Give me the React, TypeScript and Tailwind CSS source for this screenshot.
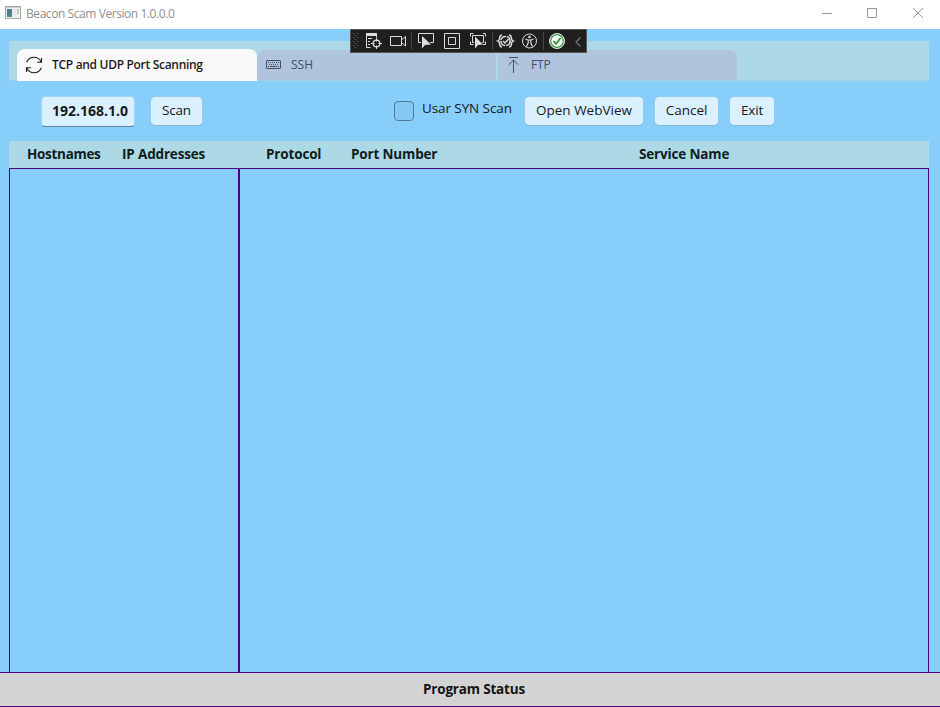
import type { ReactNode } from "react";

function WindowIcon() {
  return (
    <svg width="16" height="13" viewBox="0 0 16 13" shapeRendering="crispEdges">
      <defs>
        <linearGradient id="pane" x1="0" y1="0" x2="1" y2="1">
          <stop offset="0" stopColor="#4a6fa5" />
          <stop offset="1" stopColor="#3f9a78" />
        </linearGradient>
      </defs>
      <rect x="0.5" y="0.5" width="15" height="12" fill="#f1f3f3" stroke="#a3a9aa" />
      <rect x="1" y="1" width="14" height="1" fill="#c9cecf" />
      <rect x="2" y="3" width="5" height="8" fill="url(#pane)" />
      <rect x="8" y="3" width="4" height="8" fill="#e4ebe9" />
      <rect x="12" y="3" width="2" height="5" fill="#b9cfc6" />
    </svg>
  );
}

function TitleBar() {
  return (
    <header className="flex h-[29px] items-start bg-white pl-[5px]">
      <div className="pt-[6px]">
        <WindowIcon />
      </div>
      <span className="ml-[5px] pt-[5px] text-[12px] leading-[18px] tracking-[-0.43px] text-[#8f8f8f]">
        Beacon Scam Version 1.0.0.0
      </span>
      <svg className="ml-auto mr-[16px] mt-[7px]" width="102" height="12" viewBox="0 0 102 12" fill="none" stroke="#999">
        <path d="M0 6.5h10M45.5 1.5h9v9h-9z" />
        <path d="M91 1l10 10M101 1L91 11" />
      </svg>
    </header>
  );
}

function SyncIcon() {
  return (
    <svg width="18" height="18" viewBox="0 0 18 18" fill="none" stroke="#1b1b1b" strokeWidth="1.1">
      <path d="M1.6 6.3C3 3 5.8 1.2 9 1.2c3.300 0 5.700 1.700 7.200 4.500M16.500 2v4.300h-4.300" />
      <path d="M16.400 11.700C15 15 12.200 16.800 9 16.800c-3.300 0-5.700-1.700-7.200-4.500M1.500 16v-4.300h4.300" />
    </svg>
  );
}

function KeyboardIcon() {
  return (
    <svg width="16" height="10" viewBox="0 0 16 10" fill="none" stroke="#46505e">
      <rect x="0.500" y="0.500" width="14" height="8" rx="0.500" />
      <path d="M2 2.500h11M3 4.500h10" strokeDasharray="1 1" />
      <path d="M2 6.500h1M4 6.500h7M12 6.500h1" />
    </svg>
  );
}

function UploadIcon() {
  return (
    <svg width="11" height="17" viewBox="0 0 11 17" fill="none" stroke="#46505e">
      <path d="M1 0.500h9M5.500 3v13M0.800 7.700L5.500 3l4.700 4.700" />
    </svg>
  );
}

function Tabs() {
  return (
    <nav className="ml-[9px] mr-[11px] mt-3 flex h-10 items-end border-b border-[#a5cfdc] bg-[#add8e6] pl-2 text-[12px]">
      <div className="-mb-px flex h-8 w-[240px] items-center rounded-t-lg bg-[#f9f9f9] pl-[8px] font-semibold tracking-[-0.31px] text-[#1b1b1b]">
        <SyncIcon />
        <span className="ml-[9px]">TCP and UDP Port Scanning</span>
      </div>
      <div className="flex h-[30px] w-[239px] items-center rounded-t-lg bg-[#b0c4de] pl-[9px] text-[#46505e]">
        <KeyboardIcon />
        <span className="ml-[9px]">SSH</span>
      </div>
      <div className="ml-[2px] flex h-[30px] w-[239px] items-center rounded-t-lg bg-[#b0c4de] pl-[10px] text-[#46505e]">
        <UploadIcon />
        <span className="ml-[12px] tracking-[-0.2px]">FTP</span>
      </div>
    </nav>
  );
}

function Button({ className, children }: { className: string; children: ReactNode }) {
  return (
    <button
      className={`h-[30px] rounded-[5px] border border-[#93cdf4] border-b-[#82b5da] bg-[#dbf0fe] bg-clip-padding text-[13.5px] leading-none text-[#17191b] ${className}`}
    >
      {children}
    </button>
  );
}

function Controls() {
  return (
    <div className="flex h-[60px] items-start pl-[41px] pt-[15px] text-[#17191b]">
      <div className="h-[31px] w-[94px] rounded-[4px] border border-[#a5d5f5] border-b-[#5e7f97] bg-[#dbf0fe] bg-clip-padding pl-[10px] text-[14px] font-bold leading-[27px]">
        192.168.1.0
      </div>
      <Button className="ml-[15px] w-[53px] tracking-[-0.2px]">Scan</Button>
      <div className="ml-[191px] mt-[5px] size-5 rounded-[4px] border border-[#4f7a96] bg-[#84c8f3]" />
      <span className="ml-2 mt-[3px] w-[90px] whitespace-nowrap text-[13.5px] leading-[18px] tracking-[-0.09px]">Usar SYN Scan</span>
      <Button className="ml-[12px] w-[120px]">Open WebView</Button>
      <Button className="ml-[10px] w-[65px]">Cancel</Button>
      <Button className="ml-[10px] w-[46px] tracking-[-0.2px]">Exit</Button>
    </div>
  );
}

function Results() {
  return (
    <main className="ml-[9px] mr-[11px] flex flex-1 flex-col">
      <div className="flex h-[27px] items-center whitespace-nowrap bg-[#add8e6] pl-[18px] text-[13.5px] font-bold tracking-[-0.16px] text-[#101c20]">
        <span className="w-[95px] tracking-[-0.3px]">Hostnames</span>
        <span className="w-[144px]">IP Addresses</span>
        <span className="w-[85px]">Protocol</span>
        <span className="w-[288px]">Port Number</span>
        <span>Service Name</span>
      </div>
      <div className="flex flex-1">
        <div className="w-[230px] border border-b-0 border-[#4b0082]" />
        <div className="flex-1 border border-b-0 border-[#4b0082]" />
      </div>
    </main>
  );
}

function DebugToolbar() {
  return (
    <div className="absolute left-[350px] top-[29px] h-6 w-[237px] border border-[#555] bg-[#1f1f1f]">
      <svg width="235" height="22" viewBox="351 30 235 22" fill="none" stroke="#dcdcdc">
        <g stroke="#555" strokeDasharray="1 3">
          <path d="M353.500 33v16M357.500 33v16M355.500 35v14" strokeWidth="1.500" />
        </g>
        <path d="M411.500 32v18M492.500 32v18M543.500 32v18" stroke="#464646" />
        <path d="M366 34.500h11" strokeWidth="3" />
        <path d="M366.500 36v11.500h4M376.500 36v1.500M368 38.500h4M368 41.500h2M368 44.500h2" />
        <circle cx="376.500" cy="43.500" r="3.300" strokeWidth="1.300" />
        <path d="M376.500 38v3.500M376.500 45.500V49M371 43.500h3.500M378.500 43.500h3.500" />
        <path d="M390.500 36.500h11v9h-11zM402 39.500l3.500-3v9.500l-3.500-3" />
        <path d="M421 42.500h-2.500v-9h15v9H430" />
        <path d="M422 36v12.500l3-3.500 6-.5z" fill="#dcdcdc" stroke="none" />
        <path d="M444.500 33.500h15v15h-15zM448.500 37.500h7v7h-7z" />
        <path d="M470.500 36.500v-3h3M483 33.500h2.500v3M470.500 41.500v3h3M483 44.500h2.500v-3M474 42.500h-1.500v-7h11v7H482" />
        <path d="M475 36.500v12l3-3.500 5-.5z" fill="#dcdcdc" stroke="none" />
        <g strokeWidth="1.500">
          <path d="M502 35c-4 0-1 5-4 6 3 1 0 6 4 6M509 35c4 0 1 5 4 6-3 1 0 6-4 6" />
          <circle cx="505.500" cy="41" r="4.600" strokeDasharray="6.500 1" />
          <path d="M503 41l2 2 3.500-4" />
        </g>
        <circle cx="529.500" cy="41" r="7" />
        <circle cx="529.500" cy="37" r="1.300" fill="#dcdcdc" stroke="none" />
        <path d="M525.500 39l2.500 1h3l2.500-1M528.200 40v3l-1.700 3.500M530.800 40v3l1.700 3.500" strokeWidth="1.200" />
        <circle cx="557" cy="41" r="7.500" fill="#f0f5f0" stroke="#e4e4e4" />
        <circle cx="557" cy="41" r="6.300" fill="#f4f8f4" stroke="#389b43" strokeWidth="1.200" />
        <path d="M553.500 41l2.500 3 4.500-6" stroke="#238b32" strokeWidth="1.600" />
        <path d="M580.500 37.500L576 42l4.500 4.500" stroke="#777" strokeWidth="1.200" />
      </svg>
    </div>
  );
}

export default function App() {
  return (
    <div className="relative flex h-[707px] w-[940px] flex-col overflow-hidden bg-[#87cefa] font-['Open_Sans','Noto_Sans',sans-serif]">
      <TitleBar />
      <Tabs />
      <Controls />
      <Results />
      <footer className="flex h-[35px] items-center justify-center border-y border-[#4b0082] bg-[#d3d3d3] text-[13.5px] font-bold tracking-[-0.18px] text-[#151515]">
        <span className="ml-2">Program Status</span>
      </footer>
      <DebugToolbar />
    </div>
  );
}
